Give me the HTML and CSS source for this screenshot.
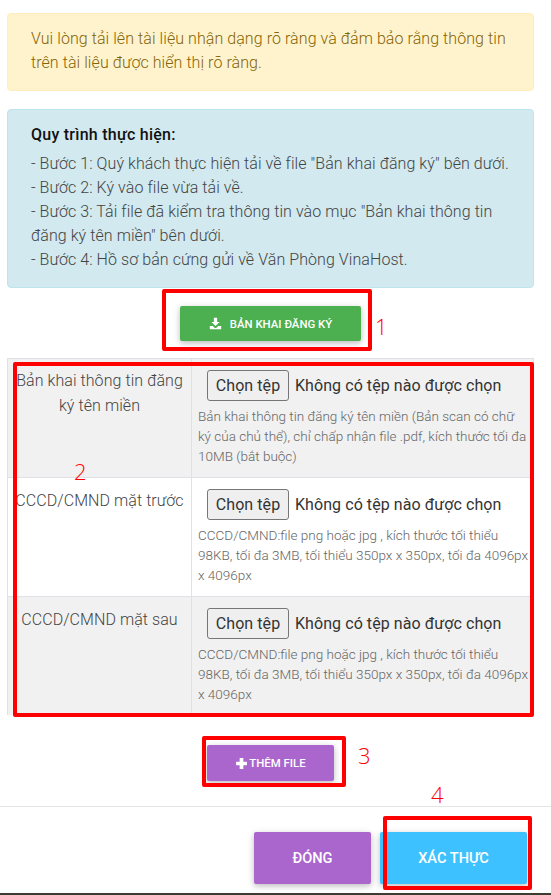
FILE: index.html
```html
<!DOCTYPE html>
<html lang="vi">
<head>
<meta charset="utf-8">
<title>Hồ sơ đăng ký</title>
<link rel="stylesheet" href="styles.css">
</head>
<body>
<div class="page">
  <div class="body">
    <div class="alert alert-warn">Vui lòng tải lên tài liệu nhận dạng rõ ràng và đảm bảo rằng thông tin trên tài liệu được hiển thị rõ ràng.</div>
    <div class="alert alert-info">
      <p class="info-title">Quy trình thực hiện:</p>
      <p>- Bước 1: Quý khách thực hiện tải về file "Bản khai đăng ký" bên dưới.</p>
      <p>- Bước 2: Ký vào file vừa tải về.</p>
      <p>- Bước 3: Tải file đã kiểm tra thông tin vào mục "Bản khai thông tin đăng ký tên miền" bên dưới.</p>
      <p>- Bước 4: Hồ sơ bản cứng gửi về Văn Phòng VinaHost.</p>
    </div>
    <div class="center download-row">
      <a class="btn btn-green">
        <svg class="icon-dl" viewBox="0 0 16 16" aria-hidden="true"><path d="M6 1h4v5h3l-5 5-5-5h3z"/><path d="M1 11h3.6l2.2 2.2c.7.6 1.7.6 2.4 0L11.400 11H15v4H1z"/></svg>
        <span>BẢN KHAI ĐĂNG KÝ</span>
      </a>
    </div>
    <div class="table">
      <div class="row row-odd">
        <div class="cell-label">Bản khai thông tin đăng ký tên miền</div>
        <div class="cell-field">
          <div class="file"><span class="file-btn">Chọn tệp</span><span class="file-name">Không có tệp nào được chọn</span></div>
          <p class="help">Bản khai thông tin đăng ký tên miền (Bản scan có chữ ký của chủ thể), chỉ chấp nhận file .pdf, kích thước tối đa 10MB (bắt buộc)</p>
        </div>
      </div>
      <div class="row">
        <div class="cell-label">CCCD/CMND mặt trước</div>
        <div class="cell-field">
          <div class="file"><span class="file-btn">Chọn tệp</span><span class="file-name">Không có tệp nào được chọn</span></div>
          <p class="help">CCCD/CMND:file png hoặc jpg , kích thước tối thiểu 98KB, tối đa 3MB, tối thiểu 350px x 350px, tối đa 4096px x 4096px</p>
        </div>
      </div>
      <div class="row row-odd">
        <div class="cell-label">CCCD/CMND mặt sau</div>
        <div class="cell-field">
          <div class="file"><span class="file-btn">Chọn tệp</span><span class="file-name">Không có tệp nào được chọn</span></div>
          <p class="help">CCCD/CMND:file png hoặc jpg , kích thước tối thiểu 98KB, tối đa 3MB, tối thiểu 350px x 350px, tối đa 4096px x 4096px</p>
        </div>
      </div>
    </div>
    <div class="center add-row">
      <a class="btn btn-purple btn-add">
        <svg class="icon-plus" viewBox="0 0 12 12" aria-hidden="true"><path d="M4.300 1h3.400v3.300H11v3.400H7.700V11H4.300V7.700H1V4.300h3.300z"/></svg>
        <span>THÊM FILE</span>
      </a>
    </div>
  </div>
  <div class="footer">
    <a class="btn btn-purple btn-close">ĐÓNG</a>
    <a class="btn btn-cyan btn-confirm">XÁC THỰC</a>
  </div>

  <div class="mark mark-1"></div><span class="num num-1">1</span>
  <div class="mark mark-2"></div><span class="num num-2">2</span>
  <div class="mark mark-3"></div><span class="num num-3">3</span>
  <div class="mark mark-4"></div><span class="num num-4">4</span>
</div>
</body>
</html>
```
FILE: styles.css
```css
* { box-sizing: border-box; }
html, body { margin: 0; padding: 0; background: #fff; }
.page {
  position: relative;
  width: 551px;
  height: 895px;
  overflow: hidden;
  font-family: Roboto, "Liberation Sans", sans-serif;
  font-size: 16px;
  font-weight: 300;
  line-height: 24px;
  letter-spacing: .07px;
  color: #212529;
  border-bottom: 2px solid #3c3c30;
}
.body { padding: 13px 17px 0 7px; }
.alert { border-radius: 4px; border: 1px solid transparent; padding: 13px 23px; }
.alert-warn { height: 78px; background: #fff3cd; border-color: #ffeeba; color: #856404; }
.alert-info {
  margin-top: 18px;
  height: 179px;
  background: #d1e9ef;
  border-color: #bee5eb;
  color: #444;
  padding: 13px 23px;
}
.alert-info p { margin: 0; }
.alert-info .info-title { font-weight: 500; color: #111; margin-bottom: 5px; letter-spacing: .25px; }
.center { display: flex; justify-content: center; }
.download-row { height: 70px; padding-top: 18px; }
.btn {
  display: inline-flex;
  align-items: center;
  justify-content: center;
  border-radius: 2px;
  color: #fff;
  font-weight: 500;
  letter-spacing: 0;
  box-shadow: 0 2px 5px rgba(0,0,0,.16), 0 2px 10px rgba(0,0,0,.12);
}
.btn-green { width: 181px; height: 35px; background: #4caf50; font-size: 11.400px; gap: 8px; }
.btn-purple { background: #aa66cc; }
.btn-cyan { background: #3dc2ff; }
.icon-dl { width: 13px; height: 13px; fill: #fff; }
.table { border: 1px solid #dee2e6; border-bottom: 0; }
.row { display: flex; border-bottom: 1px solid #dee2e6; min-height: 119px; }
.row-odd { background: #f1f1f1; }
.row:first-child .cell-label { padding-top: 9px; }
.row:last-child { border-bottom: 0; min-height: 118px; }
.cell-label {
  width: 184px;
  flex: none;
  padding: 10px 4px 0;
  text-align: center;
  color: #444;
  border-right: 1px solid #dee2e6;
  line-height: 25px;
}
.cell-field { flex: 1; padding: 11px 3px 0 6px; min-width: 0; }
.file { display: flex; align-items: center; padding-left: 9px; font-weight: 400; color: #333; }
.file-btn {
  display: block;
  width: 82px;
  height: 31px;
  line-height: 30px;
  text-align: center;
  background: #efefef;
  border: 1px solid #767676;
  border-radius: 3px;
  margin-right: 6px;
}
.file-name { white-space: nowrap; }
.help { margin: 5px 0 0; font-size: 13.500px; line-height: 20px; color: #666; letter-spacing: 0; }
.add-row { padding-top: 30px; height: 91px; }
.btn-add { width: 127px; height: 36px; font-size: 11.400px; gap: 1px; }
.icon-plus { width: 13px; height: 13px; fill: #fff; }
.footer {
  border-top: 1px solid #e5e5e5;
  display: flex;
  justify-content: flex-end;
  gap: 9px;
  padding: 25px 24px 0 0;
}
.btn-close { width: 117px; height: 52px; font-size: 14.600px; }
.btn-confirm { width: 147px; height: 52px; font-size: 14.600px; }
.mark { position: absolute; border: 4px solid #f00; border-radius: 2px; }
.mark-1 { left: 162px; top: 289px; width: 210px; height: 62px; }
.mark-2 { left: 13px; top: 362px; width: 521px; height: 355px; }
.mark-3 { left: 202px; top: 736px; width: 144px; height: 51px; }
.mark-4 { left: 383px; top: 816px; width: 149px; height: 74px; }
.num { position: absolute; color: #f00; font-size: 22px; line-height: 24px; font-weight: 300; letter-spacing: 0; font-family: "Open Sans", sans-serif; }
.num-1 { left: 375px; top: 314px; }
.num-2 { left: 74px; top: 459px; }
.num-3 { left: 358px; top: 743px; }
.num-4 { left: 431px; top: 782px; }
```
